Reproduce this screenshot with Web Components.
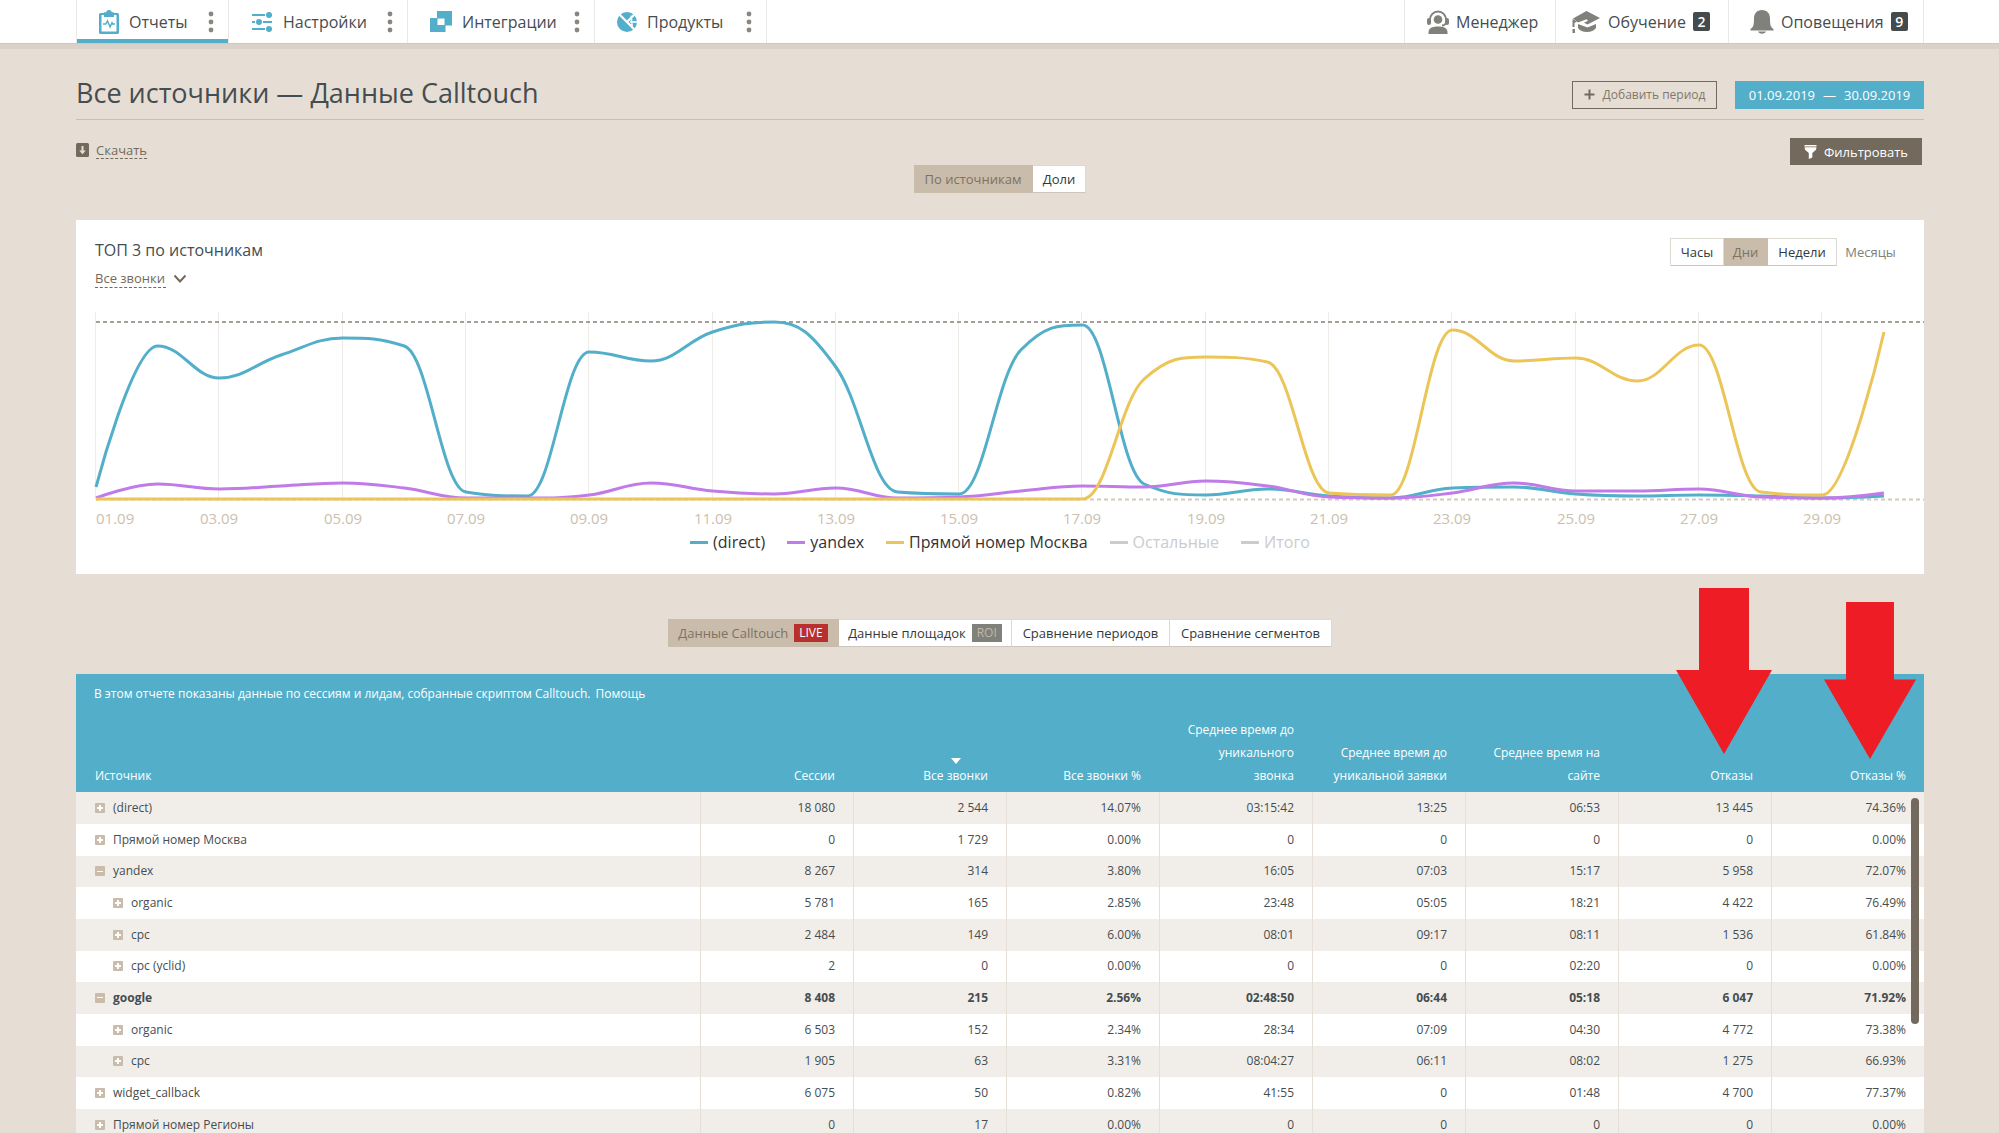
<!DOCTYPE html>
<html lang="ru">
<head>
<meta charset="utf-8">
<title>Все источники — Данные Calltouch</title>
<style>
:root{--teal:#53aec9;--brown:#736a5d;--tan:#c9bcab;--ink:#454d50;--page:#e6ded5;--side:76px}
html,body{margin:0;height:100%}
body{background:var(--page);color:var(--ink);font-family:"Open Sans","Noto Sans",sans-serif;font-size:13px}
</style>
</head>
<body>
<report-app></report-app>
<script>
const define=(name,html,setup)=>{
  const t=document.createElement('template');
  t.innerHTML=html;
  customElements.define(name,class extends HTMLElement{
    connectedCallback(){
      if(this.shadowRoot)return;
      this.attachShadow({mode:'open'}).append(t.content.cloneNode(true));
      if(setup)setup.call(this,this.shadowRoot);
    }
  });
};

const icons={
  report:['0 0 20 24','<path fill="#53aec9" fill-rule="evenodd" d="M1.500 3H5V2.200h2.200C7.500.800 8.500 0 10 0s2.500.800 2.800 2.200H15V3h3.500A1.500 1.500 0 0 1 20 4.500v18a1.500 1.500 0 0 1-1.500 1.500h-17A1.500 1.500 0 0 1 0 22.500v-18A1.500 1.500 0 0 1 1.500 3zM2.500 5v16.500h15V5H15v2H5V5z"/><path d="M4 14h2.800l1.700-3 2.600 6 1.900-4.200.8 1.200H16" fill="none" stroke="#53aec9" stroke-width="1.500"/>'],
  sliders:['0 0 22 20','<g stroke="#53aec9" stroke-width="2"><path d="M1 3h13M1 10h3M12 10h9M1 17h13M19 3h2M19 17h2"/></g><g fill="#53aec9"><circle cx="18" cy="3" r="3"/><circle cx="8" cy="10" r="3"/><circle cx="18" cy="17" r="3"/></g>'],
  squares:['0 0 22 21','<path fill="#53aec9" fill-rule="evenodd" d="M7 0h15v14.500h-6.500V21H0V7h7zM7.500 7.500v6.500h7V7.500z"/>'],
  pie:['0 0 20 20','<circle cx="10" cy="10" r="10" fill="#53aec9"/><g stroke="#fff" fill="none"><path d="M1 1 19.500 19.500" stroke-width="2.200"/><path d="M10.500 9.500 18 2" stroke-width="2.200"/><path d="M13 10h7" stroke-width="1.600"/><path d="m14 3.500 1.500 13.500" stroke-width="1.200"/><path d="M15.500 7.500h-4M15.500 12.500h-3" stroke-width="1.200"/></g>'],
  agent:['0 0 22 24','<g fill="#80817b"><path d="M1.500 22.500C1.500 18.500 4.500 16.500 11 16.500s9.500 2 9.500 6V24h-19z"/><circle cx="11" cy="9.500" r="4.300"/><rect x="0" y="8" width="4" height="7" rx="2"/><rect x="18" y="8" width="4" height="7" rx="2"/></g><path d="M3 9.500a8 8 0 0 1 16 0M19 13q-1 2.500-4 2.500" fill="none" stroke="#80817b" stroke-width="2"/>'],
  cap:['0 0 29 24','<g fill="#80817b"><path d="M14.500 1 28 8l-12.500 6.500-3.500-1.700 4-2-1.500-1.500L6 12.500 1 8.500z"/><path d="M6 14l9.500 3.500L24 14v4c-2 2.500-5 4-9 4s-7.500-1.500-9-4z"/><path d="M.500 9 5 11.500 2.500 13v4h-2z"/><rect x=".5" y="19" width="2.500" height="4"/></g>'],
  bell:['0 0 24 24','<g fill="#80817b"><path d="M12 0c5 0 8 3.500 8 8.500 0 6 .5 9 3.500 10.500V20.500H.500V19C3.500 17.500 4 14.500 4 8.500 4 3.500 7 0 12 0z"/><path d="M8 21.500h8c-.6 1.400-2 2.200-4 2.200s-3.400-.8-4-2.200z"/></g>'],
  download:['0 0 13 14','<rect width="13" height="14" rx="1.500" fill="#736a5d"/><path fill="#e6ded5" d="M5.500 3h2v4.500h2.300L6.500 11.200 3.200 7.500h2.300z"/>'],
  plus:['0 0 11 11','<path d="M5.500.500v10M.500 5.500h10" stroke="#736a5d" stroke-width="2"/>'],
  funnel:['0 0 13 14','<path fill="#fff" d="M.500 0h12v1.500H.500zM.500 2.200h12L12 4.800 8.300 8v4.500L4.800 14V8L1 4.800z"/>'],
  chevron:['0 0 14 9','<path d="m1.500 1.500 5.500 6 5.500-6" fill="none" stroke="#736a5d" stroke-width="2"/>'],
  dots:['0 0 6 22','<g fill="#8a857f"><circle cx="3" cy="3" r="2.400"/><circle cx="3" cy="11" r="2.400"/><circle cx="3" cy="19" r="2.400"/></g>'],
  arrow:['0 0 96 166','<path fill="#ee1c24" d="M23 0h50v82h23L48 166 0 82h23z"/>']
};
define('ui-icon','<style>:host{display:inline-flex;flex:none}svg{display:block;width:100%;height:100%}</style>',function(r){
  const [box,body]=icons[this.getAttribute('name')];
  r.innerHTML+=`<svg viewBox="${box}" preserveAspectRatio="none" aria-hidden="true">${body}</svg>`;
  const b=box.split(' ');
  if(!this.hasAttribute('fluid')){this.style.width=b[2]+'px';this.style.height=b[3]+'px';}
});

define('nav-tab',`<style>
:host{display:flex;align-items:center;box-sizing:border-box;height:43px;border-right:1px solid #e8e8e8;padding:0 12px 0 22px}
:host([active]){box-shadow:inset 0 -4px var(--teal)}
a{display:flex;align-items:center;flex:1;color:inherit;text-decoration:none;font-size:16px;line-height:24px;gap:10px;white-space:nowrap}
button{border:0;background:none;padding:0 2px;display:flex}
:host([end]){padding:0 0 0 21px}
:host([end]) a{gap:7px}
</style><a href="#"><slot name="icon"></slot><slot></slot></a>`,function(r){
  if(!this.hasAttribute('end'))r.innerHTML+='<button aria-label="Меню"><ui-icon name="dots"></ui-icon></button>';
});
define('count-badge','<style>:host{display:block;background:#454b4c;color:#fff;border-radius:2px;width:17px;font:600 14px/19px "Open Sans",sans-serif;text-align:center}</style><slot></slot>');

define('top-bar',`<style>
:host{display:block;background:#fff;border-bottom:1px solid #ccc8c2;box-shadow:0 5px #dad2c9;padding:0 75px 0 var(--side);height:43px;flex:none}
nav{display:flex;justify-content:space-between}
div{display:flex;border-left:1px solid #e8e8e8}
.a{width:152px}.b{width:179px}.c{width:187px}.d{width:172px}
.e{width:151px;padding-left:22px}.f{width:173px;padding-left:16px}.g{width:195px}
</style><nav><div>
<nav-tab class="a" active><ui-icon slot="icon" name="report"></ui-icon>Отчеты</nav-tab>
<nav-tab class="b"><ui-icon slot="icon" name="sliders"></ui-icon>Настройки</nav-tab>
<nav-tab class="c"><ui-icon slot="icon" name="squares"></ui-icon>Интеграции</nav-tab>
<nav-tab class="d"><ui-icon slot="icon" name="pie"></ui-icon>Продукты</nav-tab>
</div><div>
<nav-tab class="e" end><ui-icon slot="icon" name="agent"></ui-icon>Менеджер</nav-tab>
<nav-tab class="f" end><ui-icon slot="icon" name="cap"></ui-icon>Обучение<count-badge>2</count-badge></nav-tab>
<nav-tab class="g" end><ui-icon slot="icon" name="bell"></ui-icon>Оповещения<count-badge>9</count-badge></nav-tab>
</div></nav>`);

define('page-head',`<style>
:host{display:flex;justify-content:space-between;border-bottom:1px solid #c9bfb2;height:75px;box-sizing:border-box;padding-top:26px;margin-bottom:1px;height:76px;align-items:center}
h1{font-size:27px;line-height:36px;font-weight:400;margin:0 0 3px}
div{display:flex;gap:18px}
button{display:flex;align-items:center;box-sizing:border-box;height:28px;font:13px/18px "Open Sans",sans-serif;border:0;white-space:nowrap;padding:0 11px}
.add{border:1px solid #736a5d;background:none;color:#80776b;gap:8px;width:145px;padding:0 8px;justify-content:center;font-size:12px}
.date{background:var(--teal);color:#fff;gap:8px;width:189px;justify-content:center}
:host{margin-bottom:0}
</style><h1><slot></slot></h1><div>
<button class="add"><ui-icon name="plus"></ui-icon>Добавить период</button>
<button class="date"><span>01.09.2019</span><span>—</span><span>30.09.2019</span></button></div>`);

define('action-row',`<style>
:host{display:flex;justify-content:space-between;align-items:center;margin:18px 2px 0 0;height:27px}
a{display:flex;align-items:center;gap:7px;color:var(--brown);text-decoration:none;font-size:13px;line-height:16px;padding-bottom:3px}
a span{border-bottom:1px dashed var(--brown)}
button{display:flex;align-items:center;justify-content:center;gap:7px;width:132px;height:27px;border:0;background:var(--brown);color:#fff;font:13px/18px "Open Sans",sans-serif}
</style><a href="#"><ui-icon name="download"></ui-icon><span>Скачать</span></a>
<button><ui-icon name="funnel"></ui-icon>Фильтровать</button>`);

define('seg-button',`<style>
:host{display:flex}
button{display:flex;align-items:center;justify-content:center;gap:6px;width:100%;box-sizing:border-box;height:28px;border:1px solid #dcd8d2;border-left-width:0;border-bottom-color:#cbc5bd;background:#fff;color:#33393b;font:500 13px/18px "Open Sans",sans-serif;padding:0 4px 1px;white-space:nowrap}
:host([selected]) button{background:var(--tan);border-color:var(--tan);color:#7d7263;font-weight:400}
:host([plain]) button{background:none;border-color:transparent;color:#80807c;font-weight:400}
</style><button><slot></slot></button>`,function(r){
  r.querySelector('button').setAttribute('aria-pressed',this.hasAttribute('selected'));
});
define('tag-mark','<style>:host{display:block;background:#80817b;color:#c4b8a6;font:12px/18px "Open Sans",sans-serif;padding:0 5px}:host([live]){background:#b92f2d;color:#fff}</style><slot></slot>');
define('seg-group','<style>:host{display:flex;justify-content:center}</style><slot></slot>');

const H=500-312;
const series=[
 {c:'#53aec9',y:[487,346,378,355,338,346,492,496,352,361,332,322,367,492,494,350,325,484,495,489,496,498,488,487,494,496,495,496,498,496]},
 {c:'#c07be8',y:[498,484,489,486,483,488,498,498,495,483,491,494,488,498,497,491,486,487,481,486,497,498,493,483,491,491,489,497,498,493]},
 {c:'#ecc558',y:[...Array(17).fill(499),379,357,362,493,495,330,361,358,381,345,492,495,332]}
];
/* Smoothed line whose control points never pass the neighbouring values. */
function spline(p){
  let d=`M${p[0][0]} ${p[0][1]}`,prev=p[0];
  for(let i=1;i<p.length;i++){
    const [x,y]=p[i],[lx,ly]=p[i-1];let l=[x,y],rt=[x,y];
    if(p[i+1]){
      const [nx,ny]=p[i+1];
      let a=(1.5*x+lx)/2.5,b=(1.5*y+ly)/2.5,c=(1.5*x+nx)/2.5,e=(1.5*y+ny)/2.5;
      const k=(e-b)*(c-x)/(c-a)+y-e;b+=k;e+=k;
      if(b>ly&&b>y){b=Math.max(ly,y);e=2*y-b}else if(b<ly&&b<y){b=Math.min(ly,y);e=2*y-b}
      if(e>ny&&e>y){e=Math.max(ny,y);b=2*y-e}else if(e<ny&&e<y){e=Math.min(ny,y);b=2*y-e}
      l=[a,b];rt=[c,e];
    }
    d+=`C${prev[0]} ${prev[1]} ${l[0]} ${l[1]} ${x} ${y}`;prev=rt;
  }
  return d;
}
define('line-chart',`<style>
:host{display:block;height:220px;margin-left:20px}
svg{display:block;width:100%;height:220px;overflow:visible}
text{font-size:15px;fill:#cbbfaf;text-anchor:middle}
</style><svg role="img" aria-label="ТОП 3 по источникам"></svg>`,function(r){
  const svg=r.querySelector('svg');
  const draw=()=>{
    const w=this.clientWidth,step=(w-40)/29;let s='';
    for(let i=0;i<30;i+=2){
      const x=Math.round(i*step);
      s+=`<path d="M${x-.5} 0V${H}" stroke="#efece8"/>`;
      s+=`<text x="${x}" y="212" ${i?'':'style="text-anchor:start"'}>${String(i+1).padStart(2,'0')}.09</text>`;
    }
    s+=`<path d="M0 10H${w}" stroke="#a69f96" stroke-width="2" stroke-dasharray="4 3" /><path d="M0 187.500H${w}" stroke="#d3cabd" stroke-width="2" stroke-dasharray="4 3"/>`;
    for(const {c,y} of series)s+=`<path d="${spline(y.map((v,i)=>[i*step,v-312]))}" fill="none" stroke="${c}" stroke-width="3"/>`;
    svg.innerHTML=s;
  };
  draw();new ResizeObserver(draw).observe(this);
});
define('legend-item','<style>:host{display:flex;align-items:center;gap:5px;font-size:16px;line-height:20px;color:#333}i{width:18px;height:3px;background:var(--c)}:host([off]){color:#ccc}</style><i></i><span><slot></slot></span>');

define('chart-card',`<style>
:host{display:block;background:#fff;height:354px;margin-top:27px}
header{display:flex;justify-content:space-between;align-items:flex-start;padding:18px 19px 0 19px;height:74px;box-sizing:border-box}
h2{font-size:16px;line-height:24px;font-weight:400;margin:0 0 7px}
label{display:inline-flex;align-items:center;gap:7px}
select{appearance:none;border:0;border-bottom:1px dashed var(--brown);background:none;color:var(--brown);font:13px/18px "Open Sans",sans-serif;padding:0;margin:0;border-radius:0}
.h{width:54px;border-left:1px solid #dcd8d2;box-sizing:border-box}
.d{width:44px}.w{width:69px}.m{width:68px}
line-chart{margin-top:18px}
.legend{display:flex;justify-content:center;gap:22px}
</style><header><div><h2>ТОП 3 по источникам</h2>
<label><select aria-label="Тип звонков"><option>Все звонки</option></select><ui-icon name="chevron"></ui-icon></label></div>
<seg-group><seg-button class="h">Часы</seg-button><seg-button class="d" selected>Дни</seg-button><seg-button class="w">Недели</seg-button><seg-button class="m" plain>Месяцы</seg-button></seg-group></header>
<line-chart></line-chart>
<div class="legend"><legend-item style="--c:#53aec9">(direct)</legend-item><legend-item style="--c:#c07be8">yandex</legend-item><legend-item style="--c:#ecc558">Прямой номер Москва</legend-item><legend-item off style="--c:#ccc">Остальные</legend-item><legend-item off style="--c:#ccc">Итого</legend-item></div>`);

const rows=[
 ['+0','(direct)','18 080','2 544','14.07%','03:15:42','13:25','06:53','13 445','74.36%'],
 ['+0','Прямой номер Москва','0','1 729','0.00%','0','0','0','0','0.00%'],
 ['-0','yandex','8 267','314','3.80%','16:05','07:03','15:17','5 958','72.07%'],
 ['+1','organic','5 781','165','2.85%','23:48','05:05','18:21','4 422','76.49%'],
 ['+1','cpc','2 484','149','6.00%','08:01','09:17','08:11','1 536','61.84%'],
 ['+1','cpc (yclid)','2','0','0.00%','0','0','02:20','0','0.00%'],
 ['-0','google','8 408','215','2.56%','02:48:50','06:44','05:18','6 047','71.92%'],
 ['+1','organic','6 503','152','2.34%','28:34','07:09','04:30','4 772','73.38%'],
 ['+1','cpc','1 905','63','3.31%','08:04:27','06:11','08:02','1 275','66.93%'],
 ['+0','widget_callback','6 075','50','0.82%','41:55','0','01:48','4 700','77.37%'],
 ['+0','Прямой номер Регионы','0','17','0.00%','0','0','0','0','0.00%']
];
define('source-table',`<style>
:host{display:block;position:relative;margin-top:27px}
.note{background:var(--teal);color:#fff;margin:0;padding:11px 18px 0;font-size:12px;line-height:18px}
.note a{color:inherit;text-decoration:none;margin-left:2px}
table{width:100%;border-collapse:separate;border-spacing:0;table-layout:fixed;font-size:12px}
col.n{width:153px}
th{background:var(--teal);color:#fff;font-weight:400;text-align:right;vertical-align:bottom;height:89px;padding:0 18px 5px;line-height:23px;box-sizing:border-box}
th:first-child,td:first-child{text-align:left;padding-left:19px}
th i{display:block;width:0;margin-left:auto;margin-right:27px;border:5px solid transparent;border-top:6px solid #fff;border-bottom:0}
td{height:32px;box-sizing:border-box;padding:0 18px 1px 6px;text-align:right;line-height:18px;background:#fff}
td+td{border-left:1px solid #e6dfd7}
tr:nth-child(3n) td{height:31px}
tbody tr:nth-child(odd) td{background:#f1eeea}
tr.b td{font-weight:700}
td div{display:flex;align-items:center;gap:8px}
td div.in{padding-left:18px}
td button{flex:none;width:10px;height:10px;border:0;border-radius:1px;padding:0;background:linear-gradient(#fff,#fff) center/6px 1px no-repeat var(--tan)}
td button.plus{background:linear-gradient(#fff,#fff) center/6px 2px no-repeat,linear-gradient(#fff,#fff) center/2px 6px no-repeat var(--tan)}
.thumb{position:absolute;right:5px;top:124px;width:8px;height:226px;border-radius:4px;background:var(--brown)}
.one,.two{position:absolute;width:96px;height:166px;top:-86px;right:152px}
.two{width:92px;height:157px;top:-72px;right:8px}
</style>
<p class="note">В этом отчете показаны данные по сессиям и лидам, собранные скриптом Calltouch. <a href="#">Помощь</a></p>
<table><colgroup><col><col class="n"><col class="n"><col class="n"><col class="n"><col class="n"><col class="n"><col class="n"><col class="n"></colgroup>
<thead><tr><th>Источник</th><th>Сессии</th><th><i></i>Все звонки</th><th>Все звонки %</th><th>Среднее время до уникального звонка</th><th>Среднее время до уникальной заявки</th><th>Среднее время на сайте</th><th>Отказы</th><th>Отказы %</th></tr></thead><tbody></tbody></table>
<div class="thumb"></div><ui-icon class="one" name="arrow" fluid></ui-icon><ui-icon class="two" name="arrow" fluid></ui-icon>`,function(r){
  r.querySelector('tbody').innerHTML=rows.map(([k,n,...v])=>`<tr class="${n==='google'?'b':''}"><td><div class="${k[1]==='1'?'in':''}"><button class="${k[0]==='+'?'plus':''}" aria-label="${k[0]==='+'?'Развернуть':'Свернуть'}"></button>${n}</div></td>${v.map(x=>`<td>${x}</td>`).join('')}</tr>`).join('');
});

define('report-app',`<style>
:host{display:flex;flex-direction:column;height:100vh;overflow:hidden}
main{padding:0 75px 0 var(--side)}
.s1{width:119px}.s2{width:53px}
.t1{width:171px}.t2{width:173px}.t3{width:158px}.t4{width:162px}
.tabs{margin-top:45px}
</style><top-bar></top-bar><main>
<page-head>Все источники — Данные Calltouch</page-head>
<action-row></action-row>
<seg-group><seg-button class="s1" selected>По источникам</seg-button><seg-button class="s2">Доли</seg-button></seg-group>
<chart-card></chart-card>
<seg-group class="tabs"><seg-button class="t1" selected>Данные Calltouch<tag-mark live>LIVE</tag-mark></seg-button><seg-button class="t2">Данные площадок<tag-mark>ROI</tag-mark></seg-button><seg-button class="t3">Сравнение периодов</seg-button><seg-button class="t4">Сравнение сегментов</seg-button></seg-group>
<source-table></source-table>
</main>`);
</script>
</body>
</html>
